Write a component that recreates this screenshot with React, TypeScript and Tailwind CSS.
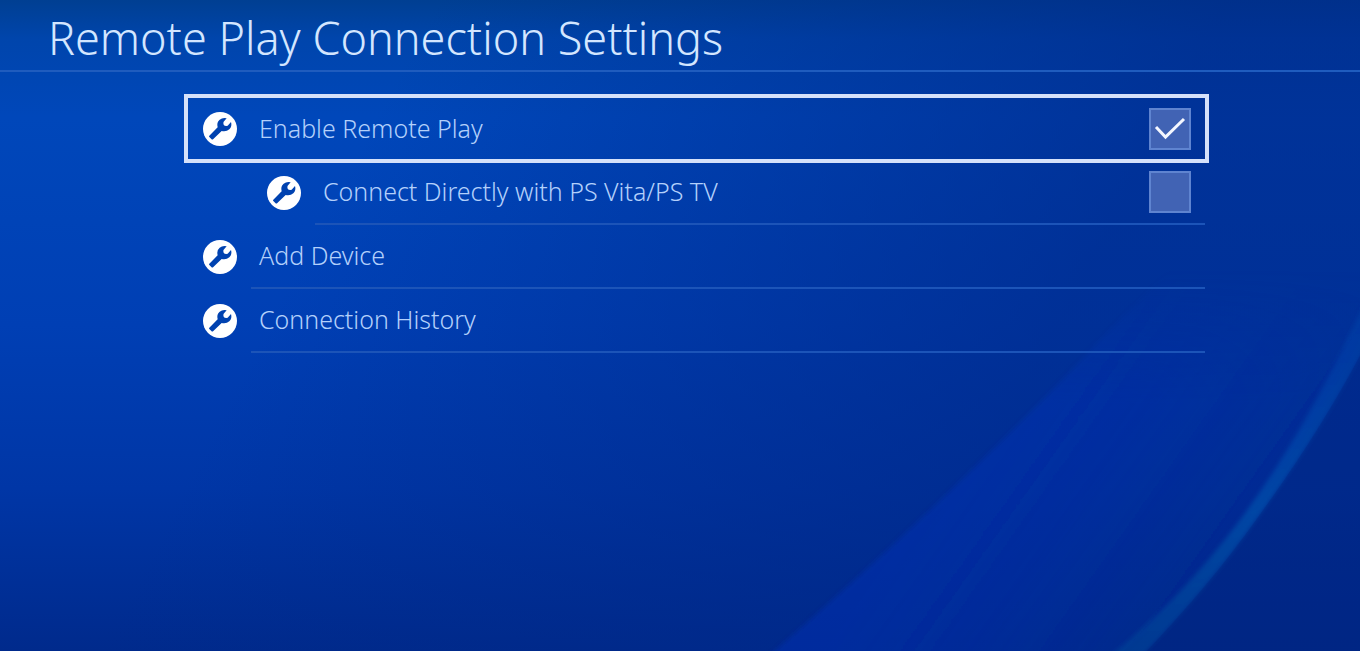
import React, { useState } from "react";

function WrenchBadge() {
  return (
    <svg viewBox="0 0 102 102" className="size-[34px] shrink-0" aria-hidden="true">
      <circle cx="51" cy="51" r="51" fill="#fff" />
      <path
        d="M19 71 L44 46 Q40 31 50 23 Q59 16 71 19 L62 29 Q60 32 62 38 Q64 42 70 42 L74 41 L84 30 Q88 43 79 52 Q70 60 56 57 L31 81 Q28 84 25 81 L19 75 Q17 73 19 71 Z"
        fill="#0042b0"
      />
    </svg>
  );
}

function Backdrop() {
  return (
    <svg
      className="absolute inset-0 size-full"
      viewBox="0 0 1360 651"
      preserveAspectRatio="none"
      aria-hidden="true"
    >
      <defs>
        <linearGradient id="base" x1="0" y1="0" x2="0" y2="1">
          <stop offset="0" stopColor="#003f92" />
          <stop offset="0.06" stopColor="#0045ac" />
          <stop offset="0.18" stopColor="#0047ba" />
          <stop offset="0.5" stopColor="#003fb4" />
          <stop offset="0.75" stopColor="#0036a6" />
          <stop offset="1" stopColor="#002a8c" />
        </linearGradient>
        <linearGradient id="side" x1="0" y1="0" x2="1" y2="0.25">
          <stop offset="0.3" stopColor="#002888" stopOpacity="0" />
          <stop offset="0.85" stopColor="#002888" stopOpacity="0.66" />
          <stop offset="1" stopColor="#002888" stopOpacity="0.66" />
        </linearGradient>
        <linearGradient id="band" gradientUnits="userSpaceOnUse" x1="950" y1="470" x2="1190" y2="640">
          <stop offset="0" stopColor="#0030bc" stopOpacity="0.4" />
          <stop offset="0.4" stopColor="#0030bc" stopOpacity="0.3" />
          <stop offset="1" stopColor="#0030bc" stopOpacity="0" />
        </linearGradient>
        <linearGradient id="fade" x1="0" y1="0" x2="0" y2="1">
          <stop offset="0" stopColor="#fff" stopOpacity="0" />
          <stop offset="0.35" stopColor="#fff" stopOpacity="1" />
        </linearGradient>
        <mask id="bandMask">
          <rect x="700" y="270" width="660" height="381" fill="url(#fade)" />
        </mask>
        <linearGradient id="arc" x1="0" y1="0" x2="0" y2="1">
          <stop offset="0" stopColor="#0058c0" stopOpacity="0.2" />
          <stop offset="0.6" stopColor="#0060b8" stopOpacity="0.5" />
          <stop offset="1" stopColor="#0058a0" stopOpacity="0.35" />
        </linearGradient>
        <filter id="soft">
          <feGaussianBlur stdDeviation="2" />
        </filter>
      </defs>
      <rect width="1360" height="651" fill="url(#base)" />
      <rect width="1360" height="651" fill="url(#side)" />
      <g mask="url(#bandMask)">
        <path
          d="M770 655 Q960 490 1110 330 L1170 270 H1370 V320 Q1290 490 1120 655 Z"
          fill="url(#band)"
          filter="url(#soft)"
        />
      </g>
      <path
        d="M1368 295 Q1310 425 1240 520 Q1180 600 1110 656 L1142 656 Q1210 585 1256 520 Q1325 425 1368 340 Z"
        fill="url(#arc)"
        filter="url(#soft)"
      />
      <path d="M1142 656 Q1210 585 1256 520 Q1325 425 1368 340 V660 Z" fill="#001c70" fillOpacity="0.22" />
    </svg>
  );
}

function Toggle({ id, initial }: { id: string; initial: boolean }) {
  const [on, setOn] = useState(initial);
  return (
    <span className="mr-3.5 grid size-[42px] shrink-0 place-items-center">
      <input
        id={id}
        type="checkbox"
        checked={on}
        onChange={() => setOn(!on)}
        className="col-start-1 row-start-1 size-full appearance-none border-2 border-[#5f84d0] bg-[#4163b4] outline-none"
      />
      {on && (
        <svg viewBox="0 0 42 42" className="pointer-events-none col-start-1 row-start-1 size-full" aria-hidden="true">
          <path d="M7 19 L16.500 29 L35 11" fill="none" stroke="#f4f7ff" strokeWidth="3" />
        </svg>
      )}
    </span>
  );
}

const rowText = "grow pb-0.5 pl-2 text-left text-[25px] leading-9 font-light text-[#b3d0fb]";

export default function App() {
  return (
    <div className="relative isolate min-h-screen overflow-hidden bg-[#0038a8] font-['Noto_Sans','Open_Sans',sans-serif]">
      <div className="absolute inset-0 -z-10">
        <Backdrop />
      </div>
      <header className="flex h-[72px] items-center border-b-2 border-[#1f5cbe] pt-1 pl-12">
        <h1 className="text-[45px] leading-none font-light text-[#d3e6ff]">Remote Play Connection Settings</h1>
      </header>
      <main className="pt-[22px] pr-[151px] pl-[184px]">
        <ul>
          <li className="-mb-0.5 flex h-[69px] items-center gap-3.5 border-4 border-[#d5e1fa] pl-[15px]">
            <WrenchBadge />
            <label htmlFor="enable" className={rowText}>Enable Remote Play</label>
            <Toggle id="enable" initial={true} />
          </li>
          <li className="flex h-16 items-center gap-3.5 pr-1 pl-[83px]">
            <WrenchBadge />
            <div className="flex h-full grow items-center border-b-2 border-[#1c54b8]">
              <label htmlFor="direct" className={rowText}>Connect Directly with PS Vita/PS TV</label>
              <Toggle id="direct" initial={false} />
            </div>
          </li>
          {["Add Device", "Connection History"].map((name) => (
            <li key={name}>
              <button type="button" className="flex h-16 w-full items-center gap-3.5 pr-1 pl-[19px]">
                <WrenchBadge />
                <span className="flex h-full grow items-center border-b-2 border-[#1c54b8]">
                  <span className={rowText}>{name}</span>
                </span>
              </button>
            </li>
          ))}
        </ul>
      </main>
    </div>
  );
}
